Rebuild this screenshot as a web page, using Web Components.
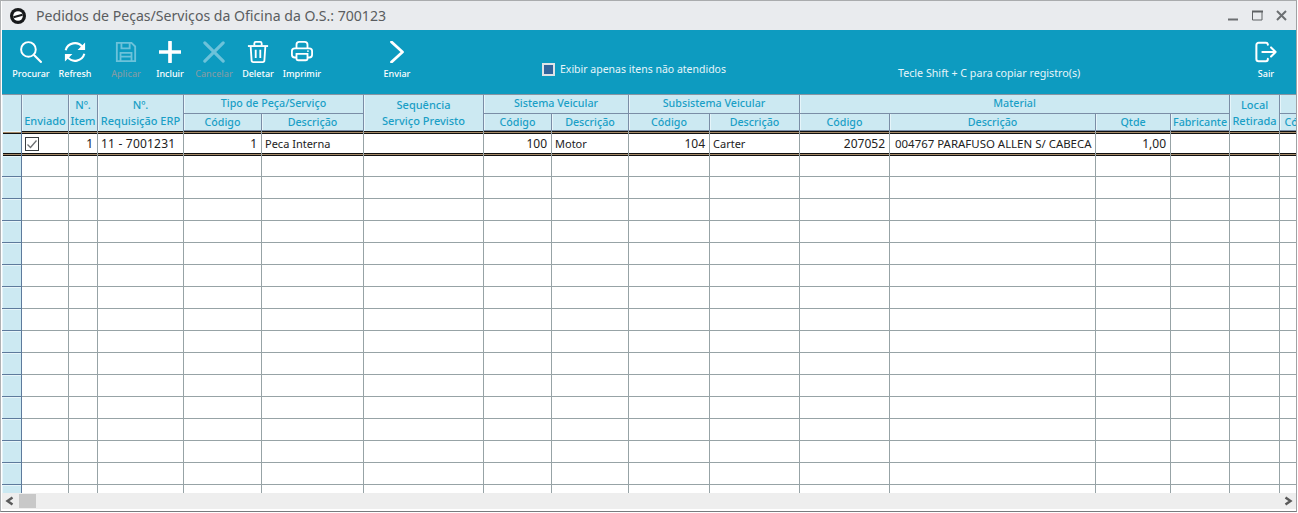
<!DOCTYPE html>
<html lang="pt-BR"><head><meta charset="utf-8"><title>Pedidos</title>
<style>
html,body{margin:0;padding:0;background:#fff;overflow:hidden}
body{font-family:"Noto Sans","Open Sans",sans-serif}
</style></head><body>
<app-window>
  <title-bar slot="title">Pedidos de Peças/Serviços da Oficina da O.S.: 700123</title-bar>
  <tool-bar slot="tools">
    <tool-button label="Procurar" icon="search"></tool-button>
    <tool-button label="Refresh" icon="refresh"></tool-button>
    <tool-button label="Aplicar" icon="save" disabled style="margin-left:7px"></tool-button>
    <tool-button label="Incluir" icon="plus"></tool-button>
    <tool-button label="Cancelar" icon="cancel" disabled></tool-button>
    <tool-button label="Deletar" icon="trash"></tool-button>
    <tool-button label="Imprimir" icon="print"></tool-button>
    <tool-button label="Enviar" icon="send" style="margin-left:51px"></tool-button>
    <filter-check style="margin-left:123px">Exibir apenas itens não atendidos</filter-check>
    <tool-hint>Tecle Shift + C para copiar registro(s)</tool-hint>
    <tool-button label="Sair" icon="exit" style="margin-left:auto;margin-right:8px"></tool-button>
  </tool-bar>
  <data-grid slot="grid"></data-grid>
  <scroll-bar slot="scroll"></scroll-bar>
</app-window>
<script>
const ICONS={
search:'<circle cx="9.200" cy="9.200" r="8" fill="none" stroke="currentColor" stroke-width="2.100"/><path d="M15 15 23.600 23.600" stroke="currentColor" stroke-width="2.300" fill="none"/>',
refresh:'<g fill="none" stroke="currentColor" stroke-width="2.300"><path d="M1.800 10A10.400 10.400 0 0 1 20 6.400"/><path d="M22.200 14A10.400 10.400 0 0 1 4 17.600"/></g><path d="M23 1.600v8.200h-8.200zM1 22.400v-8.200h8.200z" fill="currentColor"/>',
save:'<g fill="none" stroke="currentColor" stroke-width="2"><path d="M2 2h16l4 4v16H2z"/><path d="M7 2v6h9V2"/><path d="M6 22v-9h12v9M6 17h12"/></g>',
plus:'<path d="M12 1v22M1 12h22" stroke="currentColor" stroke-width="4" stroke-linecap="round" fill="none"/>',
cancel:'<path d="M2 2l20 20M22 2 2 22" stroke="currentColor" stroke-width="3.400" stroke-linecap="round" fill="none"/>',
trash:'<g fill="none" stroke="currentColor" stroke-width="2"><path d="M1 5.500h22"/><path d="M8 5V2.600A1.600 1.600 0 0 1 9.600 1h4.800A1.600 1.600 0 0 1 16 2.600V5"/><path d="M4 6l1 15a2 2 0 0 0 2 2h10a2 2 0 0 0 2-2l1-15"/><path d="M9.500 9.500v9M14.500 9.500v9"/></g>',
print:'<g fill="none" stroke="currentColor" stroke-width="2"><path d="M6 8V4a3 3 0 0 1 3-3h6a3 3 0 0 1 3 3v4"/><path d="M6 18H4a3 3 0 0 1-3-3v-4a3 3 0 0 1 3-3h16a3 3 0 0 1 3 3v4a3 3 0 0 1-3 3h-2"/><path d="M6 14h12v5a2 2 0 0 1-2 2H8a2 2 0 0 1-2-2z"/></g><circle cx="18.500" cy="11" r="1" fill="currentColor"/>',
send:'<path d="M6 1l12 11L6 23" stroke="currentColor" stroke-width="3" stroke-linecap="round" stroke-linejoin="round" fill="none"/>',
exit:'<g fill="none" stroke="currentColor" stroke-width="2.200" stroke-linecap="round" stroke-linejoin="round"><path d="M14 4V3.500A2 2 0 0 0 12 2H4a2.500 2.500 0 0 0-2.500 2.500v15A2.500 2.500 0 0 0 4 22h8a2 2 0 0 0 2-2v-.5"/><path d="M8 12h14.500M17.500 7l5 5-5 5"/></g>'
};
function def(name,css,html,init){
  customElements.define(name,class extends HTMLElement{
    constructor(){super();const r=this.attachShadow({mode:'open'});r.innerHTML='<style>'+css+'</style>'+(typeof html==='function'?html(this):html);}
    connectedCallback(){if(init&&!this._i){this._i=1;init(this)}}
  });
}
def('app-window',`:host{display:block;box-sizing:border-box;width:1297px;height:512px;border-top:1px solid #a9abad;border-bottom:1px solid #777b7e;border-left:1px solid #b0b2b4;border-right:1px solid #a0a2a4;background:#fff;padding:0 0 1px 1px}
.w{display:flex;flex-direction:column;height:100%}`,
`<div class="w"><slot name="title"></slot><slot name="tools"></slot><slot name="grid"></slot><slot name="scroll"></slot></div>`);
def('title-bar',`:host{display:flex;align-items:center;height:29px;flex:none;background:#e9ebee;color:#5a5d60;font:14.100px "Noto Sans",sans-serif}
.logo{margin:0 10px 0 8px;width:16px;height:16px;flex:none}
.t{flex:1;white-space:nowrap}
.b{display:flex;align-items:center;gap:13px;margin-right:9px}
svg{display:block}`,
`<svg class="logo" viewBox="0 0 16 16"><circle cx="8" cy="8" r="8" fill="#17191b"/><circle cx="8" cy="8" r="4.800" fill="#fff"/><path d="M3.500 9.200 12.500 6.800" stroke="#17191b" stroke-width="2.200"/></svg>
<span class="t"><slot></slot></span>
<span class="b">
<svg width="11" height="11" viewBox="0 0 11 11"><path d="M0 9.500h10" stroke="#6c6f72" stroke-width="2"/></svg>
<svg width="11" height="11" viewBox="0 0 11 11"><path d="M.5 1.500h9.500v8.500H.5z" fill="none" stroke="#5f6265"/><path d="M0 1.500h11" stroke="#5f6265" stroke-width="2"/></svg>
<svg width="11" height="11" viewBox="0 0 11 11"><path d="M1 1l9 9M10 1l-9 9" stroke="#6c6f72" stroke-width="2"/></svg>
</span>`);
def('tool-bar',`:host{display:flex;align-items:flex-start;height:64px;flex:none;background:#0d9bc0;padding-left:7px;color:#fff;box-sizing:border-box}`,`<slot></slot>`);
def('tool-button',`:host{display:flex;flex-direction:column;align-items:center;width:44px;flex:none;color:#fff;font:500 9px/12px "Noto Sans",sans-serif}
:host([disabled]){color:#6cc2da}
:host([disabled]) .l{color:#7f9ba6}
svg{width:22px;height:22px;margin-top:11px;display:block}
.l{margin-top:4.500px;white-space:nowrap}`,
el=>`<svg viewBox="0 0 24 24">${ICONS[el.getAttribute('icon')]}</svg><span class="l">${el.getAttribute('label')}</span>`);
def('filter-check',`:host{display:flex;align-items:center;gap:5px;margin-top:32px;font:10.500px/14px "Noto Sans",sans-serif;color:#e6f5fa;white-space:nowrap}
i{display:block;box-sizing:border-box;width:13px;height:13px;background:#33659c;border:2px solid #dfe3e6}`,`<i></i><slot></slot>`);
def('tool-hint',`:host{display:block;margin-left:172px;margin-top:36px;font:10.700px/14px "Noto Sans",sans-serif;color:#e6f5fa;white-space:nowrap}`,`<slot></slot>`);
const W=[20,47,29,86,78,102,120,68,77,81,90,90,206,75,59,50,46];
def('data-grid',`:host{display:block;height:399px;flex:none;overflow:hidden;background:#fff;font:11px/16px "Noto Sans",sans-serif;color:#222}
table{border-collapse:separate;border-spacing:0;table-layout:fixed;width:${W.reduce((a,b)=>a+b,0)}px}
th,td{box-sizing:border-box;padding:0;overflow:hidden;white-space:nowrap}
thead th{background:#cce9f2;color:#1a9fc6;font-size:10.700px;font-weight:500;border-right:1px solid #7a8da6;border-bottom:1px solid #7a8da6;text-align:center;box-shadow:inset 1px 0 0 #e6f5fa;vertical-align:middle}
thead tr.a th{height:20px;padding-bottom:2px;border-top:1px solid #8795a3}
thead tr.b th{height:17px;padding-bottom:0}
thead th.two{vertical-align:bottom;line-height:16px}
thead tr.a th.two{border-bottom:0;padding-bottom:2px;font-size:11px}
tbody th{background:#cce9f2;border-right:1px solid #5d7a9c;border-bottom:1px solid #5d7a9c;box-shadow:inset 1px 1px 0 #e6f5fa}
tbody td{border-right:1px solid #97a3a6;border-bottom:1px solid #97a3a6;height:22px}
tr.sel td,tr.sel th{height:25px;border-bottom:0;background-image:linear-gradient(#111 1px,#a58a68 1px,#a58a68 2px,#111 2px,#111 3px,transparent 3px,transparent 22px,#111 22px,#111 23px,#a58a68 23px,#a58a68 24px,#111 24px);}
tr.sel th{background-color:#cce9f2}
tr.sel td{background-color:#fff;padding:0 3px 1px;font-size:11px;line-height:15px}
tr.next td,tr.next th{height:21px}
tr.sel td.n{text-align:right;padding-right:4px;font-size:12px}
tr.sel td.c{font-size:12px;letter-spacing:.2px}
tr.sel td.d{font-size:11.450px;padding-left:5px}
td.chk i{display:block;box-sizing:border-box;width:14px;height:14px;margin-left:3px;border:1px solid #3b3f42;background:#fff}
td.chk svg{display:block;width:12px;height:12px}
`,`<table></table>`,el=>{
 const H=(t,a='')=>`<th ${a}>${t}</th>`;
 let h=`<colgroup>${W.map(w=>`<col style="width:${w}px">`).join('')}</colgroup><thead><tr class="a">`
 +H('','class="two rh" rowspan="2"')+H('Enviado','class="two" rowspan="2"')+H('Nº.<br>Item','class="two" rowspan="2"')+H('Nº.<br>Requisição ERP','class="two" rowspan="2"')
 +H('Tipo de Peça/Serviço','colspan="2"')+H('Sequência<br>Serviço Previsto','class="two" rowspan="2"')
 +H('Sistema Veicular','colspan="2"')+H('Subsistema Veicular','colspan="2"')+H('Material','colspan="4"')+H('Local<br>Retirada','class="two" rowspan="2"')+H('')
 +`</tr><tr class="b">`+['Código','Descrição','Código','Descrição','Código','Descrição','Código','Descrição','Qtde','Fabricante','Código'].map(t=>H(t)).join('')+`</tr></thead><tbody>`;
 h+=`<tr class="sel"><th></th><td class="chk" style="padding:0"><i><svg viewBox="0 0 12 12"><path d="M1.500 6.500 4.500 9.500 10.500 2.500" fill="none" stroke="#6d7072" stroke-width="1.300"/></svg></i></td><td class="n">1</td><td class="c">11 - 7001231</td><td class="n">1</td><td>Peca Interna</td><td></td><td class="n">100</td><td>Motor</td><td class="n">104</td><td>Carter</td><td class="n">207052</td><td class="d">004767 PARAFUSO ALLEN S/ CABECA</td><td class="n">1,00</td><td></td><td></td><td></td></tr>`;
 for(let r=0;r<16;r++){h+=`<tr class="${r==0?'next':''}"><th></th>${W.slice(1).map(()=>'<td></td>').join('')}</tr>`}
 el.shadowRoot.querySelector('table').innerHTML=h+'</tbody>';
});
def('scroll-bar',`:host{display:flex;align-items:center;height:16px;flex:none;background:#eee;box-sizing:border-box;color:#555}
svg{display:block;flex:none}
.t{width:17px;height:14px;background:#c8c8c8;margin-left:3px;flex:none}
.s{flex:1}`,
`<svg width="14" height="16" viewBox="0 0 14 16"><path d="M10.500 4.500 5.500 8l5 3.500" fill="none" stroke="#5a5a5a" stroke-width="2.400"/></svg><div class="t"></div><div class="s"></div><svg width="14" height="16" viewBox="0 0 14 16"><path d="M3.500 4.500 8.500 8l-5 3.500" fill="none" stroke="#5a5a5a" stroke-width="2.400"/></svg>`);
</script>
</body></html>
